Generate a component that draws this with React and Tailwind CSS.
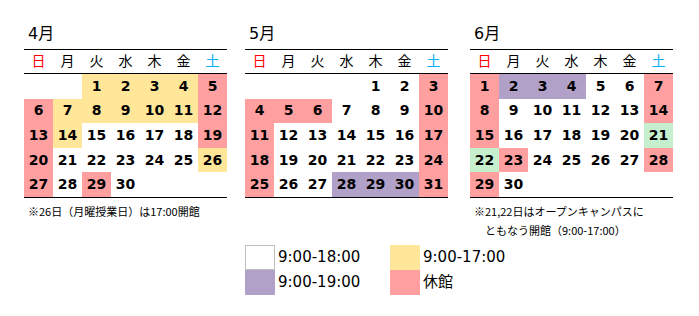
const Y = "bg-[#FFE699]";
const P = "bg-[#FF9F9F]";
const V = "bg-[#B1A0C7]";
const G = "bg-[#C6EFCE]";

const weekdays = [
  { label: "日", color: "text-[#FF0000]" },
  { label: "月", color: "text-black" },
  { label: "火", color: "text-black" },
  { label: "水", color: "text-black" },
  { label: "木", color: "text-black" },
  { label: "金", color: "text-black" },
  { label: "土", color: "text-[#00B0F0]" },
];

const months = [
  {
    title: "4月",
    offset: 2,
    days: 30,
    colors: {
      1: Y, 2: Y, 3: Y, 4: Y, 5: P,
      6: P, 7: Y, 8: Y, 9: Y, 10: Y, 11: Y, 12: P,
      13: P, 14: Y, 19: P,
      20: P, 26: Y,
      27: P, 29: P,
    },
    notes: ["※26日（月曜授業日）は17:00開館"],
    ml: "ml-[24px]",
  },
  {
    title: "5月",
    offset: 4,
    days: 31,
    colors: {
      3: P, 4: P, 5: P, 6: P, 10: P,
      11: P, 17: P, 18: P, 24: P,
      25: P, 28: V, 29: V, 30: V, 31: P,
    },
    notes: [],
    ml: "ml-[18px]",
  },
  {
    title: "6月",
    offset: 0,
    days: 30,
    colors: {
      1: P, 2: V, 3: V, 4: V, 7: P,
      8: P, 14: P, 15: P, 21: G,
      22: G, 23: P, 28: P, 29: P,
    },
    notes: ["※21,22日はオープンキャンパスに", "ともなう開館（9:00-17:00）"],
    ml: "ml-[22px]",
  },
];

function Month({ m }) {
  const cells = [];
  for (let i = 0; i < m.offset; i++) cells.push(null);
  for (let d = 1; d <= m.days; d++) cells.push(d);
  while (cells.length < 35) cells.push(null);

  return (
    <div className={`${m.ml} w-[203px]`}>
      <div className="h-[20px] pl-[4px] text-[16px] leading-[20px] text-black">{m.title}</div>
      <div className="mt-[5px] border-t border-b border-black grid grid-cols-7 h-[25px]">
        {weekdays.map((w) => (
          <div key={w.label} className={`flex items-center justify-center text-[14px] ${w.color}`}>
            {w.label}
          </div>
        ))}
      </div>
      <div className="grid grid-cols-7 border-b border-black">
        {cells.map((d, i) => (
          <div
            key={i}
            className={`h-[24.6px] flex items-center justify-center font-bold text-[14px] text-black ${
              d && m.colors[d] ? m.colors[d] : "bg-white"
            }`}
          >
            {d}
          </div>
        ))}
      </div>
      {m.notes.length > 0 && (
        <div
          className="mt-[4px] text-[11px] leading-[19px] text-black"
          style={{ fontFamily: '"Noto Sans CJK JP", sans-serif' }}
        >
          {m.notes.map((n, i) => (
            <div key={i} className={i === 0 ? "pl-[4px]" : "pl-[15px]"}>
              {n}
            </div>
          ))}
        </div>
      )}
    </div>
  );
}

function LegendItem({ box, label }) {
  return (
    <div className="flex items-center h-[25px]">
      <div className={`w-[30px] h-[25px] ${box}`} />
      <span className="ml-[3px] text-[15px] text-black">{label}</span>
    </div>
  );
}

export default function App() {
  return (
    <div
      className="w-[699px] h-[316px] bg-white overflow-hidden pt-[24px]"
      style={{ fontFamily: '"DejaVu Sans", "Noto Sans CJK JP", sans-serif' }}
    >
      <div className="flex items-start h-[221px]">
        {months.map((m) => (
          <Month key={m.title} m={m} />
        ))}
      </div>
      <div className="ml-[245px] flex">
        <div className="w-[145px]">
          <LegendItem box="bg-white border border-[#BFBFBF]" label="9:00-18:00" />
          <LegendItem box={V} label="9:00-19:00" />
        </div>
        <div>
          <LegendItem box={Y} label="9:00-17:00" />
          <LegendItem box={P} label="休館" />
        </div>
      </div>
    </div>
  );
}
